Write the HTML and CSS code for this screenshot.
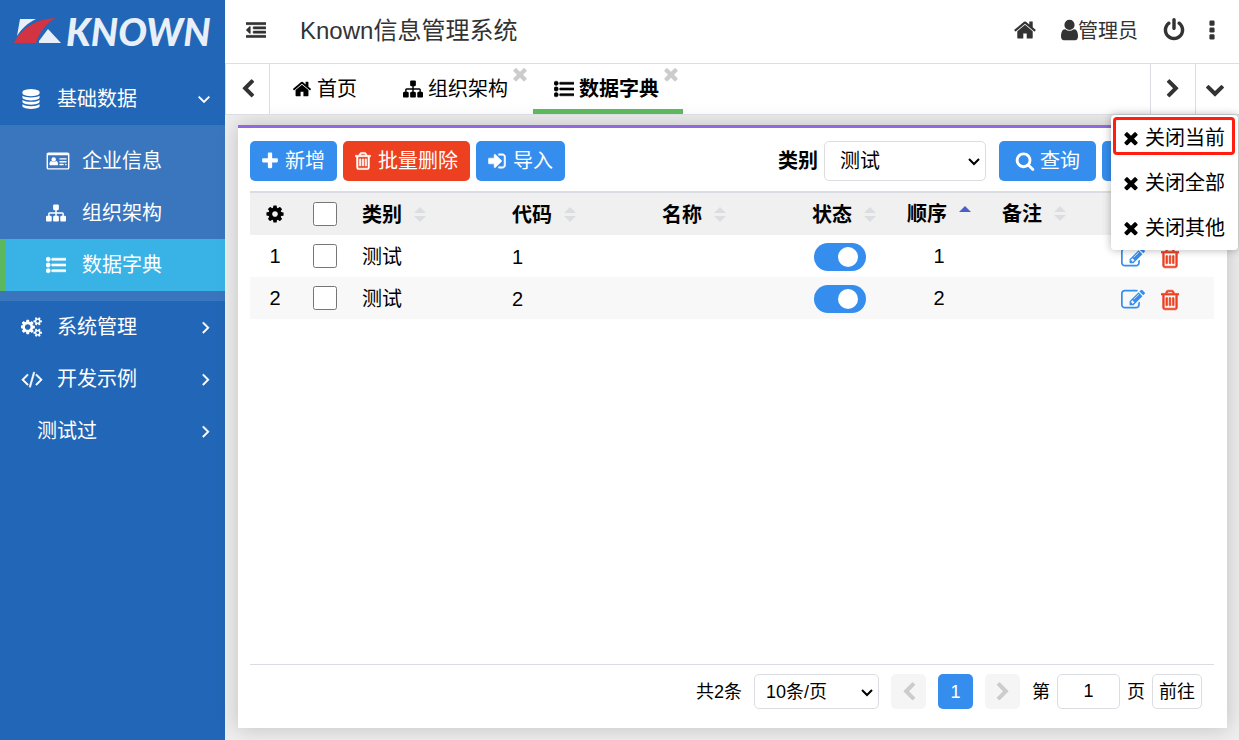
FILE: index.html
```
<!DOCTYPE html>
<html lang="zh-CN">
<head>
<meta charset="utf-8">
<title>Known信息管理系统</title>
<link rel="stylesheet" href="styles.css">
</head>
<body>
<svg class="sprite" aria-hidden="true">
  <symbol id="home" viewBox="0 0 1792 1792"><path d="M1472 992v480q0 26-19 45t-45 19h-384v-384h-256v384h-384q-26 0-45-19t-19-45v-480q0-1 .5-3t.5-3l575-474 575 474q1 2 1 6zm223-69l-62 74q-8 9-21 11h-3q-13 0-21-7l-692-577-692 577q-12 8-24 7-13-2-21-11l-62-74q-8-10-7-23.500t11-21.500l719-599q32-26 76-26t76 26l244 204v-195q0-14 9-23t23-9h192q14 0 23 9t9 23v408l219 182q10 8 11 21.500t-7 23.500z"/></symbol>
  <symbol id="chevron-left" viewBox="0 0 1792 1792"><path d="M1427 301l-531 531 531 531q19 19 19 45t-19 45l-166 166q-19 19-45 19t-45-19l-742-742q-19-19-19-45t19-45l742-742q19-19 45-19t45 19l166 166q19 19 19 45t-19 45z"/></symbol>
  <symbol id="chevron-right" viewBox="0 0 1792 1792"><path d="M1363 877l-742 742q-19 19-45 19t-45-19l-166-166q-19-19-19-45t19-45l531-531-531-531q-19-19-19-45t19-45l166-166q19-19 45-19t45 19l742 742q19 19 19 45t-19 45z"/></symbol>
  <symbol id="chevron-down" viewBox="0 0 1792 1792"><path d="M1683 808l-742 741q-19 19-45 19t-45-19l-742-741q-19-19-19-45.500t19-45.500l166-165q19-19 45-19t45 19l531 531 531-531q19-19 45-19t45 19l166 165q19 19 19 45.500t-19 45.500z"/></symbol>
  <symbol id="angle-down" viewBox="0 0 1792 1792"><path d="M1395 736q0 13-10 23l-466 466q-10 10-23 10t-23-10l-466-466q-10-10-10-23t10-23l50-50q10-10 23-10t23 10l393 393 393-393q10-10 23-10t23 10l50 50q10 10 10 23z"/></symbol>
  <symbol id="angle-right" viewBox="0 0 1792 1792"><path d="M1171 960q0 13-10 23l-466 466q-10 10-23 10t-23-10l-50-50q-10-10-10-23t10-23l393-393-393-393q-10-10-10-23t10-23l50-50q10-10 23-10t23 10l466 466q10 10 10 23z"/></symbol>
  <symbol id="times" viewBox="0 0 1792 1792"><path d="M1490 1322q0 40-28 68l-136 136q-28 28-68 28t-68-28l-294-294-294 294q-28 28-68 28t-68-28l-136-136q-28-28-28-68t28-68l294-294-294-294q-28-28-28-68t28-68l136-136q28-28 68-28t68 28l294 294 294-294q28-28 68-28t68 28l136 136q28 28 28 68t-28 68l-294 294 294 294q28 28 28 68z"/></symbol>
  <symbol id="plus" viewBox="192 0 1408 1792"><path d="M1600 736v192q0 40-28 68t-68 28h-416v416q0 40-28 68t-68 28h-192q-40 0-68-28t-28-68v-416h-416q-40 0-68-28t-28-68v-192q0-40 28-68t68-28h416v-416q0-40 28-68t68-28h192q40 0 68 28t28 68v416h416q40 0 68 28t28 68z"/></symbol>
  <symbol id="trash" viewBox="192 0 1408 1792"><path d="M704 736v576q0 14-9 23t-23 9h-64q-14 0-23-9t-9-23v-576q0-14 9-23t23-9h64q14 0 23 9t9 23zm256 0v576q0 14-9 23t-23 9h-64q-14 0-23-9t-9-23v-576q0-14 9-23t23-9h64q14 0 23 9t9 23zm256 0v576q0 14-9 23t-23 9h-64q-14 0-23-9t-9-23v-576q0-14 9-23t23-9h64q14 0 23 9t9 23zm128 724v-948h-896v948q0 22 7 40.500t14.500 27 10.500 8.500h832q3 0 10.500-8.500t14.500-27 7-40.500zm-672-1076h448l-48-117q-7-9-17-11h-317q-10 2-17 11zm928 32v64q0 14-9 23t-23 9h-96v948q0 83-47 143.500t-113 60.500h-832q-66 0-113-58.500t-47-141.500v-952h-96q-14 0-23-9t-9-23v-64q0-14 9-23t23-9h309l70-167q15-37 54-63t79-26h320q40 0 79 26t54 63l70 167h309q14 0 23 9t9 23z"/></symbol>
  <symbol id="sign-in" viewBox="128 0 1536 1792"><path d="M1312 896q0 26-19 45l-544 544q-19 19-45 19t-45-19-19-45v-288h-448q-26 0-45-19t-19-45v-384q0-26 19-45t45-19h448v-288q0-26 19-45t45-19 45 19l544 544q19 19 19 45zm352-352v704q0 119-84.500 203.500t-203.500 84.500h-320q-13 0-22.500-9.500t-9.500-22.500q0-4-1-20t-.5-26.500 3-23.500 10-19.500 20.500-6.500h320q66 0 113-47t47-113v-704q0-66-47-113t-113-47h-312l-11.500-1-11.500-3-8-5.500-7-9-2-13.500q0-4-1-20t-.5-26.500 3-23.500 10-19.500 20.500-6.500h320q119 0 203.500 84.500t84.500 203.500z"/></symbol>
  <symbol id="search" viewBox="64 0 1664 1792"><path d="M1216 832q0-185-131.500-316.500t-316.500-131.500-316.500 131.500-131.500 316.500 131.500 316.500 316.500 131.500 316.500-131.500 131.500-316.500zm512 832q0 52-38 90t-90 38q-54 0-90-38l-343-342q-179 124-399 124-143 0-273.500-55.500t-225-150-150-225-55.500-273.500 55.500-273.500 150-225 225-150 273.500-55.500 273.500 55.500 225 150 150 225 55.500 273.500q0 220-124 399l343 343q37 37 37 90z"/></symbol>
  <symbol id="cog" viewBox="0 0 1792 1792"><path d="M1152 896q0-106-75-181t-181-75-181 75-75 181 75 181 181 75 181-75 75-181zm512-109v222q0 12-8 23t-20 13l-185 28q-19 54-39 91 35 50 107 138 10 12 10 25t-9 23q-27 37-99 108t-94 71q-12 0-26-9l-138-108q-44 23-91 38-16 136-29 186-7 28-36 28h-222q-14 0-24.500-8.500t-11.500-21.500l-28-184q-49-16-90-37l-141 107q-10 9-25 9-14 0-25-11-126-114-165-168-7-10-7-23 0-12 8-23 15-21 51-66.500t54-70.500q-27-50-41-99l-183-27q-13-2-21-12.500t-8-23.500v-222q0-12 8-23t19-13l186-28q14-46 39-92-40-57-107-138-10-12-10-24 0-10 9-23 26-36 98.500-107.500t94.500-71.500q13 0 26 10l138 107q44-23 91-38 16-136 29-186 7-28 36-28h222q14 0 24.500 8.500t11.500 21.500l28 184q49 16 90 37l142-107q9-9 24-9 13 0 25 10 129 119 165 170 7 8 7 22 0 12-8 23-15 21-51 66.500t-54 70.500q26 50 41 98l183 28q13 2 21 12.500t8 23.500z"/></symbol>
  <symbol id="cogs" viewBox="0 0 1920 1792"><path d="M832 896q0-106-75-181t-181-75-181 75-75 181 75 181 181 75 181-75 75-181zm768 512q0-52-38-90t-90-38-90 38-38 90q0 53 37.500 90.500t90.500 37.500 90.500-37.500 37.500-90.500zm0-1024q0-52-38-90t-90-38-90 38-38 90q0 53 37.500 90.500t90.500 37.500 90.500-37.500 37.500-90.500zm-384 421v185q0 10-7 19.500t-16 10.500l-155 24q-11 35-32 76 34 48 90 115 7 11 7 20 0 12-7 19-23 30-82.500 89.500t-78.500 59.500q-11 0-21-7l-115-90q-37 19-77 31-11 108-23 155-7 24-30 24h-186q-11 0-20-7.500t-10-17.500l-23-153q-34-10-75-31l-118 89q-7 7-20 7-11 0-21-8-144-133-144-160 0-9 7-19 10-14 41-53t47-61q-23-44-35-82l-152-24q-10-1-17-9.500t-7-19.500v-185q0-10 7-19.500t16-10.500l155-24q11-35 32-76-34-48-90-115-7-11-7-20 0-12 7-20 22-30 82-89t79-59q11 0 21 7l115 90q34-18 77-32 11-108 23-154 7-24 30-24h186q11 0 20 7.500t10 17.500l23 153q34 10 75 31l118-89q8-7 20-7 11 0 21 8 144 133 144 160 0 8-7 19-12 16-42 54t-45 60q23 48 34 82l152 23q10 2 17 10.500t7 19.500zm640 533v140q0 16-149 31-12 27-30 52 51 113 51 138 0 4-4 7-122 71-124 71-8 0-46-47t-52-68q-20 2-30 2t-30-2q-14 21-52 68t-46 47q-2 0-124-71-4-3-4-7 0-25 51-138-18-25-30-52-149-15-149-31v-140q0-16 149-31 13-29 30-52-51-113-51-138 0-4 4-7 4-2 35-20t59-34 30-16q8 0 46 46.500t52 67.500q20-2 30-2t30 2q51-71 92-112l6-2q4 0 124 70 4 3 4 7 0 25-51 138 17 23 30 52 149 15 149 31zm0-1024v140q0 16-149 31-12 27-30 52 51 113 51 138 0 4-4 7-122 71-124 71-8 0-46-47t-52-68q-20 2-30 2t-30-2q-14 21-52 68t-46 47q-2 0-124-71-4-3-4-7 0-25 51-138-18-25-30-52-149-15-149-31v-140q0-16 149-31 13-29 30-52-51-113-51-138 0-4 4-7 4-2 35-20t59-34 30-16q8 0 46 46.500t52 67.500q20-2 30-2t30 2q51-71 92-112l6-2q4 0 124 70 4 3 4 7 0 25-51 138 17 23 30 52 149 15 149 31z"/></symbol>
  <symbol id="code" viewBox="0 0 1920 1792"><path d="M617 1399l-50 50q-10 10-23 10t-23-10l-466-466q-10-10-10-23t10-23l466-466q10-10 23-10t23 10l50 50q10 10 10 23t-10 23l-393 393 393 393q10 10 10 23t-10 23zm591-1067l-373 1291q-4 13-15.500 19.500t-23.500 2.500l-62-17q-13-4-19.500-15.500t-2.500-24.500l373-1291q4-13 15.500-19.500t23.500-2.500l62 17q13 4 19.500 15.500t2.500 24.500zm657 651l-466 466q-10 10-23 10t-23-10l-50-50q-10-10-10-23t10-23l393-393-393-393q-10-10-10-23t10-23l50-50q10-10 23-10t23 10l466 466q10 10 10 23t-10 23z"/></symbol>
  <symbol id="sitemap" viewBox="0 0 1792 1792"><path d="M1792 1248v320q0 40-28 68t-68 28h-320q-40 0-68-28t-28-68v-320q0-40 28-68t68-28h96v-192h-512v192h96q40 0 68 28t28 68v320q0 40-28 68t-68 28h-320q-40 0-68-28t-28-68v-320q0-40 28-68t68-28h96v-192h-512v192h96q40 0 68 28t28 68v320q0 40-28 68t-68 28h-320q-40 0-68-28t-28-68v-320q0-40 28-68t68-28h96v-192q0-52 38-90t90-38h512v-192h-96q-40 0-68-28t-28-68v-320q0-40 28-68t68-28h320q40 0 68 28t28 68v320q0 40-28 68t-68 28h-96v192h512q52 0 90 38t38 90v192h96q40 0 68 28t28 68z"/></symbol>
  <symbol id="user" viewBox="256 0 1280 1792"><path d="M1536 1399q0 109-62.500 187t-150.500 78h-854q-88 0-150.500-78t-62.500-187q0-85 8.500-160.500t31.500-152 58.500-131 94-89 134.500-34.500q131 128 313 128t313-128q76 0 134.500 34.500t94 89 58.500 131 31.500 152 8.500 160.500zm-256-887q0 159-112.500 271.500t-271.500 112.500-271.500-112.500-112.500-271.500 112.500-271.500 271.500-112.500 271.500 112.500 112.500 271.500z"/></symbol>
  <symbol id="power" viewBox="0 0 1792 1792"><path d="M1664 896q0 156-61 298t-164 245-245 164-298 61-298-61-245-164-164-245-61-298q0-182 80.500-343t226.500-270q43-32 95.500-25t83.500 50q32 42 24.500 94.500t-49.500 84.500q-98 74-151.500 181t-53.500 228q0 104 40.500 198.500t109.500 163.500 163.500 109.500 198.500 40.500 198.500-40.500 163.500-109.500 109.500-163.500 40.500-198.500q0-121-53.500-228t-151.500-181q-42-32-49.500-84.500t24.500-94.500q31-43 84-50t95 25q146 109 226.500 270t80.500 343zm-640-768v640q0 52-38 90t-90 38-90-38-38-90v-640q0-52 38-90t90-38 90 38 38 90z"/></symbol>
  <symbol id="ellipsis" viewBox="0 0 1792 1792"><rect x="704" y="192" width="384" height="384" rx="96"/><rect x="704" y="704" width="384" height="384" rx="96"/><rect x="704" y="1216" width="384" height="384" rx="96"/></symbol>
  <symbol id="database" viewBox="0 0 1792 1792"><path d="M896 768q237 0 443-43t325-127v170q0 69-103 128t-280 93.500-385 34.500-385-34.500-280-93.500-103-128v-170q119 84 325 127t443 43zm0 768q237 0 443-43t325-127v170q0 69-103 128t-280 93.500-385 34.500-385-34.500-280-93.500-103-128v-170q119 84 325 127t443 43zm0-384q237 0 443-43t325-127v170q0 69-103 128t-280 93.500-385 34.500-385-34.500-280-93.500-103-128v-170q119 84 325 127t443 43zm0-1152q208 0 385 34.500t280 93.500 103 128v128q0 69-103 128t-280 93.500-385 34.500-385-34.500-280-93.500-103-128v-128q0-69 103-128t280-93.500 385-34.500z"/></symbol>
  <symbol id="list" viewBox="0 0 1792 1792"><circle cx="192" cy="384" r="192"/><circle cx="192" cy="896" r="192"/><circle cx="192" cy="1408" r="192"/><rect x="512" y="288" width="1280" height="192" rx="32"/><rect x="512" y="800" width="1280" height="192" rx="32"/><rect x="512" y="1312" width="1280" height="192" rx="32"/></symbol>
  <symbol id="dedent" viewBox="0 0 1792 1792"><path d="M384 608v576q0 13-9.500 22.500t-22.500 9.500q-14 0-23-9l-288-288q-9-9-9-23t9-23l288-288q9-9 23-9 13 0 22.500 9.500t9.500 22.500z"/><rect y="224" width="1792" height="192" rx="32"/><rect x="640" y="608" width="1152" height="192" rx="32"/><rect x="640" y="992" width="1152" height="192" rx="32"/><rect y="1376" width="1792" height="192" rx="32"/></symbol>
  <symbol id="edit" viewBox="0 0 1792 1792"><path d="M888 1184l116-116-152-152-116 116v56h96v96h56zm440-720q-16-16-33 1l-350 350q-17 17-1 33t33-1l350-350q17-17 1-33zm80 594v190q0 119-84.500 203.500t-203.500 84.500h-832q-119 0-203.500-84.500t-84.500-203.500v-832q0-119 84.500-203.500t203.500-84.500h832q63 0 117 25 15 7 18 23 3 17-9 29l-49 49q-14 14-32 8-23-6-45-6h-832q-66 0-113 47t-47 113v832q0 66 47 113t113 47h832q66 0 113-47t47-113v-126q0-13 9-22l64-64q15-15 35-7t20 29zm-96-738l288 288-672 672h-288v-288zm444 132l-92 92-288-288 92-92q28-28 68-28t68 28l152 152q28 28 28 68t-28 68z"/></symbol>
  <symbol id="card" viewBox="0 0 2048 1792"><path fill-rule="evenodd" d="M160 128h1728q66 0 113 47t47 113v1216q0 66-47 113t-113 47h-1728q-66 0-113-47t-47-113v-1216q0-66 47-113t113-47zm-32 256v1120q0 32 32 32h1728q32 0 32-32v-1120z"/><circle cx="640" cy="768" r="200"/><path d="M256 1216q0-300 170-320 90 90 214 90t214-90q170 20 170 320 0 64-70 64h-628q-70 0-70-64z"/><rect x="1152" y="640" width="640" height="128" rx="32"/><rect x="1152" y="896" width="640" height="128" rx="32"/><rect x="1152" y="1152" width="384" height="128" rx="32"/><rect x="1664" y="1152" width="128" height="128" rx="32"/></symbol>
  <symbol id="sort" viewBox="0 0 12 16"><path d="M6 0l6 6H0z"/><path d="M0 9h12l-6 6z"/></symbol>
  <symbol id="sort-up" viewBox="0 0 12 16"><path d="M6 0l6 6H0z"/></symbol>
</svg>

<div class="app">
  <aside class="sidebar">
    <a class="logo" href="#">
      <svg class="logo-mark" viewBox="0 0 48 28" aria-hidden="true"><path fill="#e8eff8" d="M6 2h16C14 6 8 11 3 19z"/><path fill="#d33443" d="M0 26C8 10 22 2 42 1 32 6 26 14 22 26z"/><path fill="#e8eff8" d="M25 24l9-12 13 14H25z"/></svg>
      <span class="logo-text">KNOWN</span>
    </a>
    <nav class="menu">
      <a class="menu-item" href="#"><svg class="icon"><use href="#database"/></svg><span>基础数据</span><svg class="icon arrow down"><use href="#angle-down"/></svg></a>
      <div class="submenu">
        <a class="menu-item" href="#"><svg class="icon card"><use href="#card"/></svg><span>企业信息</span></a>
        <a class="menu-item" href="#"><svg class="icon"><use href="#sitemap"/></svg><span>组织架构</span></a>
        <a class="menu-item active" href="#"><svg class="icon firm"><use href="#list"/></svg><span>数据字典</span></a>
      </div>
      <a class="menu-item" href="#"><svg class="icon wide"><use href="#cogs"/></svg><span>系统管理</span><svg class="icon arrow"><use href="#angle-right"/></svg></a>
      <a class="menu-item" href="#"><svg class="icon wide firm"><use href="#code"/></svg><span>开发示例</span><svg class="icon arrow"><use href="#angle-right"/></svg></a>
      <a class="menu-item plain" href="#"><span>测试过</span><svg class="icon arrow"><use href="#angle-right"/></svg></a>
    </nav>
  </aside>

  <div class="main">
    <header class="header">
      <button class="bare" aria-label="收起菜单"><svg class="icon firm"><use href="#dedent"/></svg></button>
      <h1 class="title">Known信息管理系统</h1>
      <div class="actions">
        <button class="bare" aria-label="首页"><svg class="icon big"><use href="#home"/></svg></button>
        <button class="bare user"><svg class="icon person"><use href="#user"/></svg><span>管理员</span></button>
        <button class="bare" aria-label="退出"><svg class="icon big"><use href="#power"/></svg></button>
        <button class="bare more" aria-label="更多"><svg class="icon big"><use href="#ellipsis"/></svg></button>
      </div>
    </header>

    <div class="tabs">
      <button class="tab-nav prev" aria-label="向左"><svg class="icon"><use href="#chevron-left"/></svg></button>
      <div class="tab-list">
        <div class="tab"><a href="#"><svg class="icon"><use href="#home"/></svg><span>首页</span></a></div>
        <div class="tab"><a href="#"><svg class="icon"><use href="#sitemap"/></svg><span>组织架构</span></a><button class="bare close" aria-label="关闭"><svg class="icon"><use href="#times"/></svg></button></div>
        <div class="tab current"><a href="#"><svg class="icon firm"><use href="#list"/></svg><span>数据字典</span></a><button class="bare close" aria-label="关闭"><svg class="icon"><use href="#times"/></svg></button></div>
      </div>
      <button class="tab-nav" aria-label="向右"><svg class="icon"><use href="#chevron-right"/></svg></button>
      <button class="tab-nav last" aria-label="标签操作"><svg class="icon"><use href="#chevron-down"/></svg></button>
      <div class="dropdown">
        <button class="dropdown-item marked"><svg class="icon"><use href="#times"/></svg><span>关闭当前</span></button>
        <button class="dropdown-item"><svg class="icon"><use href="#times"/></svg><span>关闭全部</span></button>
        <button class="dropdown-item"><svg class="icon"><use href="#times"/></svg><span>关闭其他</span></button>
      </div>
    </div>

    <main class="content">
      <section class="panel">
        <div class="toolbar">
          <button class="btn"><svg class="icon slim"><use href="#plus"/></svg><span>新增</span></button>
          <button class="btn danger"><svg class="icon slim firm"><use href="#trash"/></svg><span>批量删除</span></button>
          <button class="btn"><svg class="icon mid firm"><use href="#sign-in"/></svg><span>导入</span></button>
          <div class="query">
            <label for="category">类别</label>
            <div class="select category"><select id="category"><option>测试</option></select><svg class="caret" viewBox="0 0 12 8"><path d="M1 1l5 5 5-5"/></svg></div>
            <button class="btn search"><svg class="icon"><use href="#search"/></svg><span>查询</span></button>
            <button class="btn extra" aria-label="更多查询"></button>
          </div>
        </div>

        <div class="table-wrap">
          <table class="grid">
            <colgroup><col class="c-tight"><col class="c-tight"><col class="c-text"><col class="c-text"><col class="c-text"><col class="c-state"><col class="c-order"><col class="c-note"><col></colgroup>
            <thead>
              <tr>
                <th class="center"><svg class="icon"><use href="#cog"/></svg></th>
                <th class="center"><input class="check" type="checkbox" aria-label="全选"></th>
                <th><span class="head">类别<svg class="sort"><use href="#sort"/></svg></span></th>
                <th><span class="head">代码<svg class="sort"><use href="#sort"/></svg></span></th>
                <th><span class="head">名称<svg class="sort"><use href="#sort"/></svg></span></th>
                <th><span class="head">状态<svg class="sort"><use href="#sort"/></svg></span></th>
                <th class="center"><span class="head">顺序<svg class="sort on"><use href="#sort-up"/></svg></span></th>
                <th class="center"><span class="head">备注<svg class="sort"><use href="#sort"/></svg></span></th>
                <th></th>
              </tr>
            </thead>
            <tbody>
              <tr>
                <td class="center">1</td>
                <td class="center"><input class="check" type="checkbox" aria-label="选择第1行"></td>
                <td>测试</td><td>1</td><td></td>
                <td><input class="switch" type="checkbox" checked aria-label="状态1"></td>
                <td class="center">1</td><td></td>
                <td class="center"><span class="ops"><button class="bare edit" aria-label="编辑"><svg class="icon big"><use href="#edit"/></svg></button><button class="bare remove" aria-label="删除"><svg class="icon bin firm"><use href="#trash"/></svg></button></span></td>
              </tr>
              <tr>
                <td class="center">2</td>
                <td class="center"><input class="check" type="checkbox" aria-label="选择第2行"></td>
                <td>测试</td><td>2</td><td></td>
                <td><input class="switch" type="checkbox" checked aria-label="状态2"></td>
                <td class="center">2</td><td></td>
                <td class="center"><span class="ops"><button class="bare edit" aria-label="编辑"><svg class="icon big"><use href="#edit"/></svg></button><button class="bare remove" aria-label="删除"><svg class="icon bin firm"><use href="#trash"/></svg></button></span></td>
              </tr>
            </tbody>
          </table>
        </div>

        <footer class="pager">
          <span>共2条</span>
          <div class="select size"><select aria-label="每页条数"><option>10条/页</option></select><svg class="caret" viewBox="0 0 12 8"><path d="M1 1l5 5 5-5"/></svg></div>
          <button class="page" disabled aria-label="上一页"><svg class="icon"><use href="#chevron-left"/></svg></button>
          <button class="page now">1</button>
          <button class="page" disabled aria-label="下一页"><svg class="icon"><use href="#chevron-right"/></svg></button>
          <div class="jump"><label for="page">第</label><input id="page" type="text" value="1"><span>页</span><button class="go">前往</button></div>
        </footer>
      </section>
    </main>
  </div>
</div>
</body>
</html>
```
FILE: styles.css
```
* { box-sizing: border-box; }

body {
  margin: 0;
  font: 20px/30px "Liberation Sans", "Noto Sans CJK SC", sans-serif;
  color: #000;
}

a { color: inherit; text-decoration: none; }
button, input, select { font: inherit; color: inherit; }
button { cursor: pointer; }

.sprite { position: absolute; width: 0; height: 0; }
.icon { display: block; flex: none; width: 20px; height: 20px; fill: currentColor; }
.icon.firm, .arrow { stroke: currentColor; stroke-width: 50; }
.icon.big { width: 24px; height: 24px; }
.icon.slim { width: 16px; }
.icon.mid { width: 18px; }
.icon.wide { width: 22px; }
.icon.card { width: 24px; }
.icon.person { width: 17px; height: 24px; }
.icon.bin { width: 18px; height: 24px; }

.bare { display: flex; align-items: center; padding: 0; border: 0; background: none; }

.app { display: flex; min-height: 100vh; }

/* Sidebar */
.sidebar { flex: none; width: 225px; background: #2266b7; color: #fff; }
.logo { display: flex; align-items: center; gap: 4px; height: 73px; padding: 0 0 12px 14px; }
.logo-mark { flex: none; width: 48px; height: 28px; }
.logo-text { font: italic 900 38px/40px Lato, sans-serif; color: #e8eff8; }
.menu-item { display: flex; align-items: center; height: 52px; padding: 0 9px 0 21px; }
.menu-item > span { flex: 1; }
.menu-item .icon:first-child { margin-right: 16px; }
.menu-item .icon.wide { margin-right: 14px; }
.menu-item .down { margin-right: 2px; }
.menu-item.plain { padding-left: 37px; }
.submenu { padding: 10px 0; background: #3a76be; }
.submenu .menu-item { padding-left: 40px; border-left: 6px solid transparent; }
.submenu .menu-item .icon.card { margin-right: 12px; }
.submenu .menu-item.active { background: #39b3e6; border-left-color: #5cb85c; }

/* Header */
.main { flex: 1; min-width: 0; display: flex; flex-direction: column; }
.header { display: flex; align-items: center; height: 64px; padding: 0 15px 3px 21px; border-bottom: 1px solid #dcdfe0; color: #333; }
.title { margin: 0 0 0 34px; padding-top: 2px; font-size: 24px; font-weight: 400; line-height: 36px; }
.actions { display: flex; align-items: center; gap: 24px; margin-left: auto; }
.user span { padding-top: 2px; }
.more { margin-left: -10px; }

/* Tabs */
.tabs { position: relative; display: flex; height: 51px; border-bottom: 1px solid #dcdde2; }
.tab-nav { display: flex; align-items: center; justify-content: center; width: 45px; padding: 0; border: 0; border-left: 1px solid #dcdde2; background: #fff; color: #333; }
.tab-nav.prev { border-right: 1px solid #dcdde2; }
.tab-nav.last { width: 44px; padding-right: 6px; }
.tab-list { flex: 1; display: flex; gap: 1px; padding-left: 1px; }
.tab { position: relative; display: flex; }
.tab a { display: flex; align-items: center; gap: 5px; padding: 0 24px 0 21px; }
.tab.current { font-weight: 700; box-shadow: inset 0 -5px #5cb85c; }
.close { position: absolute; top: 0; right: 2px; color: #ccc; }

.dropdown { position: absolute; z-index: 2; top: 51px; right: 1px; width: 127px; background: #fff; border-radius: 4px; box-shadow: 0 0 8px rgba(0, 0, 0, .3); }
.dropdown-item { position: relative; display: flex; align-items: center; gap: 4px; width: 100%; height: 45px; padding: 0 10px; border: 0; background: none; white-space: nowrap; }
.dropdown-item.marked::before { content: ""; position: absolute; inset: 2px 3px 5px 2px; border: 3px solid #ff1e10; border-radius: 4px; }

/* Content */
.content { flex: 1; display: flex; padding: 10px 12px 12px 13px; background: #eee; }
.panel { flex: 1; min-width: 0; display: flex; flex-direction: column; padding: 13px 13px 19px 12px; border-top: 3px solid #9168de; background: #fff; box-shadow: 0 0 20px rgba(0, 0, 0, .2); }
.toolbar { display: flex; gap: 6px; margin-bottom: 10px; }
.btn { display: flex; align-items: center; gap: 7px; height: 40px; padding: 0 12px; border: 0; border-radius: 5px; background: #358eed; color: #fff; white-space: nowrap; }
.btn.danger { background: #ec4021; }
.query { display: flex; align-items: center; gap: 6px; margin-left: auto; }
.query label { font-weight: 700; }
.search { gap: 5px; padding: 0 16px; margin-left: 7px; }
.extra { width: 112px; }

.select { position: relative; display: flex; }
.select select { appearance: none; width: 100%; border: 1px solid #dcdde2; border-radius: 5px; background: #fff; }
.caret { position: absolute; right: 6px; top: 50%; width: 12px; height: 8px; margin-top: -3px; fill: none; stroke: #000; stroke-width: 2; pointer-events: none; }
.category { width: 162px; }
.category select { height: 40px; padding: 0 15px; }

.table-wrap { flex: 1; border-bottom: 1px solid #dcdde2; }
.grid { width: 100%; table-layout: fixed; border-collapse: separate; border-spacing: 0; border-top: 2px solid #dcdde2; }
.c-tight { width: 50px; }
.c-text { width: 150px; }
.c-state { width: 95px; }
.c-order { width: 88px; }
.c-note { width: 102px; }
.grid th, .grid td { height: 42px; padding: 2px 12px 0; text-align: left; vertical-align: middle; }
.grid th { background: #f0f0f0; }
.grid tbody tr:nth-child(even) { background: #f8f8f8; }
.grid .center { text-align: center; padding: 0; }
.center > .icon { margin: 0 auto; }
.head { display: inline-flex; align-items: center; gap: 12px; }
.sort { width: 12px; height: 16px; fill: #dcdde0; }
.sort.on { fill: #4d5fc7; }
.check { display: block; width: 24px; height: 24px; margin: 0 auto; }
.switch { appearance: none; display: flex; align-items: center; justify-content: flex-end; width: 52px; height: 28px; margin: 0 2px; padding: 0 8px; border-radius: 14px; background: #358eed; }
.switch::before { content: ""; width: 20px; height: 20px; border-radius: 50%; background: #fff; }
.ops { display: inline-flex; gap: 16px; vertical-align: middle; }
.edit { color: #358eed; }
.remove { color: #ec4021; }

/* Pager */
.pager { display: flex; align-items: center; justify-content: flex-end; gap: 12px; padding: 9px 12px 0 0; font-size: 18px; }
.size { width: 125px; }
.size select { height: 35px; padding: 0 11px; }
.page { display: flex; align-items: center; justify-content: center; width: 35px; height: 35px; padding: 0; border: 0; border-radius: 5px; background: #f5f5f5; color: #ccc; }
.page.now { background: #358eed; color: #fff; }
.jump { display: flex; align-items: center; gap: 7px; }
.jump input { width: 63px; height: 35px; border: 1px solid #dcdde2; border-radius: 5px; text-align: center; }
.go { height: 35px; padding: 0 6px; border: 1px solid #dcdde2; border-radius: 5px; background: #fff; }
```
